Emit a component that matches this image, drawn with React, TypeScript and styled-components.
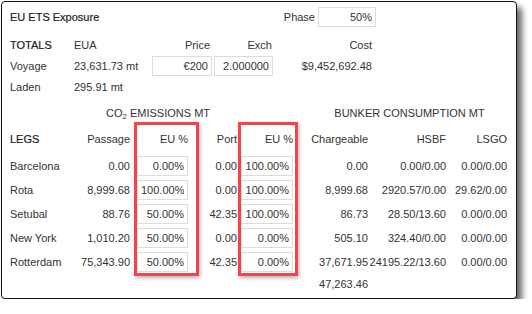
import React from "react";
import styled, { createGlobalStyle } from "styled-components";

const Global = createGlobalStyle`
  html, body { margin: 0; padding: 0; background: #fff; }
  body { font-family: "Liberation Sans", Arial, sans-serif; font-size: 11px; color: #333; }
`;

const Page = styled.div`
  padding: 1px 0 0 1px;
`;

const Card = styled.div`
  position: relative;
  box-sizing: border-box;
  width: 516px;
  height: 298px;
  border: 1px solid #111;
  border-radius: 4px;
  background: #fff;
  box-shadow: 5px 6px 6px rgba(0, 0, 0, 0.6);
  padding: 5px 8px 0 8px;
`;

const HeaderRow = styled.div`
  display: flex;
  align-items: center;
  width: 366px;
  height: 20px;
`;

const Title = styled.div`
  flex: 1;
  color: #222;
  -webkit-text-stroke: 0.2px #222;
`;

const Label = styled.span`
  margin-right: 3px;
`;

const Field = styled.input<{ $w: number }>`
  box-sizing: border-box;
  width: ${(p) => p.$w}px;
  height: 20px;
  border: 1px solid #dcdcdc;
  border-radius: 0;
  padding: 0 3px;
  margin: 0;
  font: inherit;
  color: #333;
  text-align: right;
  background: #fff;
  outline: none;
`;

const Totals = styled.div`
  display: grid;
  grid-template-columns: 64px 78px 61px 60px 99px;
  grid-template-rows: 20px 21px 21px;
  margin-top: 8px;
  align-items: center;
`;

const Cell = styled.div<{ $right?: boolean; $pr?: number; $end?: boolean }>`
  text-align: ${(p) => (p.$right ? "right" : "left")};
  padding-right: ${(p) => p.$pr ?? 0}px;
  white-space: nowrap;
  display: flex;
  justify-content: ${(p) => (p.$right || p.$end ? "flex-end" : "flex-start")};
`;

const Strong = styled(Cell)`
  color: #222;
  -webkit-text-stroke: 0.2px #222;
`;

const Table = styled.div`
  display: grid;
  grid-template-columns: 65px 55px 58px 49px 56px 75px 78px 61px;
  grid-template-rows: 18px 32px repeat(5, 24px) 20px;
  margin-top: 7px;
  align-items: center;
`;

const Section = styled.div<{ $col: string; $pl?: number; $pr?: number }>`
  grid-column: ${(p) => p.$col};
  text-align: center;
  padding-left: ${(p) => p.$pl ?? 0}px;
  padding-right: ${(p) => p.$pr ?? 0}px;
  white-space: nowrap;
  sub {
    font-size: 8px;
    vertical-align: -2px;
    line-height: 0;
  }
`;

const HeadCell = styled(Cell)`
  padding-top: 2px;
`;

const Highlight = styled.div<{ $l: number; $t: number; $w: number; $h: number }>`
  position: absolute;
  left: ${(p) => p.$l}px;
  top: ${(p) => p.$t}px;
  width: ${(p) => p.$w}px;
  height: ${(p) => p.$h}px;
  box-sizing: border-box;
  border: 3px solid #f2454b;
  box-shadow: 1px 2px 4px rgba(0, 0, 0, 0.3);
  pointer-events: none;
`;

const legs = [
  ["Barcelona", "0.00", "0.00%", "0.00", "100.00%", "0.00", "0.00/0.00", "0.00/0.00"],
  ["Rota", "8,999.68", "100.00%", "0.00", "100.00%", "8,999.68", "2920.57/0.00", "29.62/0.00"],
  ["Setubal", "88.76", "50.00%", "42.35", "100.00%", "86.73", "28.50/13.60", "0.00/0.00"],
  ["New York", "1,010.20", "50.00%", "0.00", "0.00%", "505.10", "324.40/0.00", "0.00/0.00"],
  ["Rotterdam", "75,343.90", "50.00%", "42.35", "0.00%", "37,671.95", "24195.22/13.60", "0.00/0.00"],
];

export default function App() {
  return (
    <Page>
      <Global />
      <Card>
        <HeaderRow>
          <Title>EU ETS Exposure</Title>
          <Label>Phase</Label>
          <Field $w={58} value="50%" readOnly />
        </HeaderRow>

        <Totals>
          <Strong>TOTALS</Strong>
          <Cell>EUA</Cell>
          <Cell $right $pr={3}>Price</Cell>
          <Cell $right $pr={1}>Exch</Cell>
          <Cell $right>Cost</Cell>

          <Cell>Voyage</Cell>
          <Cell>23,631.73 mt</Cell>
          <Cell>
            <Field $w={60} value="€200" readOnly />
          </Cell>
          <Cell $end>
            <Field $w={59} value="2.000000" readOnly />
          </Cell>
          <Cell $right>$9,452,692.48</Cell>

          <Cell>Laden</Cell>
          <Cell>295.91 mt</Cell>
          <Cell />
          <Cell />
          <Cell />
        </Totals>

        <Table>
          <Section $col="2 / 5" $pl={4}>
            CO<sub>2</sub> EMISSIONS MT
          </Section>
          <Section $col="6 / 9" $pl={19}>
            BUNKER CONSUMPTION MT
          </Section>

          <HeadCell as={Strong}>LEGS</HeadCell>
          <HeadCell $right>Passage</HeadCell>
          <HeadCell $right>EU %</HeadCell>
          <HeadCell $right>Port</HeadCell>
          <HeadCell $right>EU %</HeadCell>
          <HeadCell $right>Chargeable</HeadCell>
          <HeadCell $right>HSBF</HeadCell>
          <HeadCell $right>LSGO</HeadCell>

          {legs.map((r) => (
            <React.Fragment key={r[0]}>
              <Cell>{r[0]}</Cell>
              <Cell $right>{r[1]}</Cell>
              <Cell $end>
                <Field $w={51} value={r[2]} readOnly />
              </Cell>
              <Cell $right>{r[3]}</Cell>
              <Cell $end>
                <Field $w={52} value={r[4]} readOnly />
              </Cell>
              <Cell $right>{r[5]}</Cell>
              <Cell $right>{r[6]}</Cell>
              <Cell $right>{r[7]}</Cell>
            </React.Fragment>
          ))}

          <Cell />
          <Cell />
          <Cell />
          <Cell />
          <Cell />
          <Cell $right>47,263.46</Cell>
          <Cell />
          <Cell />
        </Table>

        <Highlight $l={132} $t={120} $w={65} $h={154} />
        <Highlight $l={236} $t={120} $w={60} $h={154} />
      </Card>
    </Page>
  );
}
